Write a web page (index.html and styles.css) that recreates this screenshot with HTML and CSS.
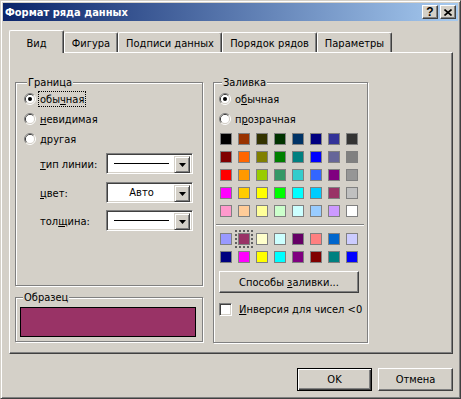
FILE: index.html
```html
<!DOCTYPE html>
<html>
<head>
<meta charset="utf-8">
<title>Формат ряда данных</title>
<link rel="stylesheet" href="styles.css">
</head>
<body>
<div class="window">
  <div class="titlebar">
    <span class="title">Формат ряда данных</span>
    <div class="tbtns">
      <div class="tbtn help">?</div>
      <div class="tbtn close"><svg width="8" height="7" viewBox="0 0 8 7"><path d="M0.5 0.5 L7.5 6.5 M7.5 0.5 L0.5 6.5" stroke="#000" stroke-width="1.6" fill="none"/></svg></div>
    </div>
  </div>
  <div class="client">
    <div class="tabs">
      <div class="tab active">Вид</div>
      <div class="tab t2">Фигура</div>
      <div class="tab t3">Подписи данных</div>
      <div class="tab t4">Порядок рядов</div>
      <div class="tab t5">Параметры</div>
    </div>
    <div class="panel">
      <div class="col-left">
        <div class="group g-border">
          <div class="legend">Граница</div>
          <div class="radio-row">
            <svg class="radio" width="12" height="12" viewBox="0 0 12 12"><path d="M2.11 9.89 A5.5 5.5 0 0 1 9.89 2.11" stroke="#808080" fill="none"/><path d="M9.89 2.11 A5.5 5.5 0 0 1 2.11 9.89" stroke="#fff" fill="none"/><path d="M2.82 9.18 A4.5 4.5 0 0 1 9.18 2.82" stroke="#404040" fill="none"/><path d="M9.18 2.82 A4.5 4.5 0 0 1 2.82 9.18" stroke="#d4d0c8" fill="none"/><circle cx="6" cy="6" r="4" fill="#fff"/><circle cx="6" cy="6" r="2" fill="#000"/></svg>
            <span class="lbl focus">обы<u>ч</u>ная</span>
          </div>
          <div class="radio-row">
            <svg class="radio" width="12" height="12" viewBox="0 0 12 12"><path d="M2.11 9.89 A5.5 5.5 0 0 1 9.89 2.11" stroke="#808080" fill="none"/><path d="M9.89 2.11 A5.5 5.5 0 0 1 2.11 9.89" stroke="#fff" fill="none"/><path d="M2.82 9.18 A4.5 4.5 0 0 1 9.18 2.82" stroke="#404040" fill="none"/><path d="M9.18 2.82 A4.5 4.5 0 0 1 2.82 9.18" stroke="#d4d0c8" fill="none"/><circle cx="6" cy="6" r="4" fill="#fff"/></svg>
            <span class="lbl"><u>н</u>евидимая</span>
          </div>
          <div class="radio-row">
            <svg class="radio" width="12" height="12" viewBox="0 0 12 12"><path d="M2.11 9.89 A5.5 5.5 0 0 1 9.89 2.11" stroke="#808080" fill="none"/><path d="M9.89 2.11 A5.5 5.5 0 0 1 2.11 9.89" stroke="#fff" fill="none"/><path d="M2.82 9.18 A4.5 4.5 0 0 1 9.18 2.82" stroke="#404040" fill="none"/><path d="M9.18 2.82 A4.5 4.5 0 0 1 2.82 9.18" stroke="#d4d0c8" fill="none"/><circle cx="6" cy="6" r="4" fill="#fff"/></svg>
            <span class="lbl">другая</span>
          </div>
          <div class="combo-row r1">
            <span class="clbl"><u>т</u>ип линии:</span>
            <div class="combo"><div class="cval"><div class="sample-line"></div></div><div class="cbtn"><svg width="7" height="4" viewBox="0 0 7 4"><path d="M0 0 H7 L3.5 4 Z" fill="#000"/></svg></div></div>
          </div>
          <div class="combo-row r2">
            <span class="clbl"><u>ц</u>вет:</span>
            <div class="combo"><div class="cval text">Авто</div><div class="cbtn"><svg width="7" height="4" viewBox="0 0 7 4"><path d="M0 0 H7 L3.5 4 Z" fill="#000"/></svg></div></div>
          </div>
          <div class="combo-row r3">
            <span class="clbl">тол<u>щ</u>ина:</span>
            <div class="combo"><div class="cval"><div class="sample-line"></div></div><div class="cbtn"><svg width="7" height="4" viewBox="0 0 7 4"><path d="M0 0 H7 L3.5 4 Z" fill="#000"/></svg></div></div>
          </div>
        </div>
        <div class="group g-sample">
          <div class="legend">Образец</div>
          <div class="sample"></div>
        </div>
      </div>
      <div class="group g-fill">
        <div class="legend">Заливка</div>
        <div class="radio-row">
          <svg class="radio" width="12" height="12" viewBox="0 0 12 12"><path d="M2.11 9.89 A5.5 5.5 0 0 1 9.89 2.11" stroke="#808080" fill="none"/><path d="M9.89 2.11 A5.5 5.5 0 0 1 2.11 9.89" stroke="#fff" fill="none"/><path d="M2.82 9.18 A4.5 4.5 0 0 1 9.18 2.82" stroke="#404040" fill="none"/><path d="M9.18 2.82 A4.5 4.5 0 0 1 2.82 9.18" stroke="#d4d0c8" fill="none"/><circle cx="6" cy="6" r="4" fill="#fff"/><circle cx="6" cy="6" r="2" fill="#000"/></svg>
          <span class="lbl">о<u>б</u>ычная</span>
        </div>
        <div class="radio-row">
          <svg class="radio" width="12" height="12" viewBox="0 0 12 12"><path d="M2.11 9.89 A5.5 5.5 0 0 1 9.89 2.11" stroke="#808080" fill="none"/><path d="M9.89 2.11 A5.5 5.5 0 0 1 2.11 9.89" stroke="#fff" fill="none"/><path d="M2.82 9.18 A4.5 4.5 0 0 1 9.18 2.82" stroke="#404040" fill="none"/><path d="M9.18 2.82 A4.5 4.5 0 0 1 2.82 9.18" stroke="#d4d0c8" fill="none"/><circle cx="6" cy="6" r="4" fill="#fff"/></svg>
          <span class="lbl">п<u>р</u>озрачная</span>
        </div>
        <div class="palette">
          <div class="sw" style="background:#000000"></div>
          <div class="sw" style="background:#993300"></div>
          <div class="sw" style="background:#333300"></div>
          <div class="sw" style="background:#003300"></div>
          <div class="sw" style="background:#003366"></div>
          <div class="sw" style="background:#000080"></div>
          <div class="sw" style="background:#333399"></div>
          <div class="sw" style="background:#333333"></div>
          <div class="sw" style="background:#800000"></div>
          <div class="sw" style="background:#ff6600"></div>
          <div class="sw" style="background:#808000"></div>
          <div class="sw" style="background:#008000"></div>
          <div class="sw" style="background:#008080"></div>
          <div class="sw" style="background:#0000ff"></div>
          <div class="sw" style="background:#666699"></div>
          <div class="sw" style="background:#808080"></div>
          <div class="sw" style="background:#ff0000"></div>
          <div class="sw" style="background:#ff9900"></div>
          <div class="sw" style="background:#99cc00"></div>
          <div class="sw" style="background:#339966"></div>
          <div class="sw" style="background:#33cccc"></div>
          <div class="sw" style="background:#3366ff"></div>
          <div class="sw" style="background:#800080"></div>
          <div class="sw" style="background:#969696"></div>
          <div class="sw" style="background:#ff00ff"></div>
          <div class="sw" style="background:#ffcc00"></div>
          <div class="sw" style="background:#ffff00"></div>
          <div class="sw" style="background:#00ff00"></div>
          <div class="sw" style="background:#00ffff"></div>
          <div class="sw" style="background:#00ccff"></div>
          <div class="sw" style="background:#993366"></div>
          <div class="sw" style="background:#c0c0c0"></div>
          <div class="sw" style="background:#ff99cc"></div>
          <div class="sw" style="background:#ffcc99"></div>
          <div class="sw" style="background:#ffff99"></div>
          <div class="sw" style="background:#ccffcc"></div>
          <div class="sw" style="background:#ccffff"></div>
          <div class="sw" style="background:#99ccff"></div>
          <div class="sw" style="background:#cc99ff"></div>
          <div class="sw" style="background:#ffffff"></div>
        </div>
        <div class="sep"></div>
        <div class="palette lower">
          <div class="sw" style="background:#9999ff"></div>
          <div class="sw selected" style="background:#993366"></div>
          <div class="sw" style="background:#ffffcc"></div>
          <div class="sw" style="background:#ccffff"></div>
          <div class="sw" style="background:#660066"></div>
          <div class="sw" style="background:#ff8080"></div>
          <div class="sw" style="background:#0066cc"></div>
          <div class="sw" style="background:#ccccff"></div>
          <div class="sw" style="background:#000080"></div>
          <div class="sw" style="background:#ff00ff"></div>
          <div class="sw" style="background:#ffff00"></div>
          <div class="sw" style="background:#00ffff"></div>
          <div class="sw" style="background:#800080"></div>
          <div class="sw" style="background:#800000"></div>
          <div class="sw" style="background:#008080"></div>
          <div class="sw" style="background:#0000ff"></div>
        </div>
        <div class="btn fill-btn"><span>Способы <u>з</u>аливки...</span></div>
        <div class="check-row">
          <div class="check"></div>
          <span class="lbl"><u>И</u>нверсия для чисел &lt;0</span>
        </div>
      </div>
    </div>
    <div class="buttons">
      <div class="btn default">OK</div>
      <div class="btn">Отмена</div>
    </div>
  </div>
</div>
</body>
</html>
```

FILE: styles.css
```css
* { box-sizing: border-box; }
html, body { margin: 0; padding: 0; background: #d4d0c8; }
body {
  font-family: "DejaVu Sans Condensed", "DejaVu Sans", sans-serif;
  font-stretch: condensed;
  font-size: 11px;
  line-height: 13px;
  color: #000;
}
u { text-decoration: underline; text-underline-offset: 1px; }

.window {
  width: 461px;
  height: 399px;
  border: 1px solid;
  border-color: #d4d0c8 #404040 #404040 #d4d0c8;
  box-shadow: inset 1px 1px 0 #fff, inset -1px -1px 0 #808080;
  padding: 2px;
  background: #d4d0c8;
  display: flex;
  flex-direction: column;
}

.titlebar {
  height: 18px;
  flex: none;
  background: linear-gradient(to right, #0a246a, #a6caf0);
  display: flex;
  align-items: center;
  justify-content: space-between;
  padding: 0 2px 0 2px;
}
.title {
  color: #fff;
  font-weight: bold;
  font-size: 11px;
}
.tbtns { display: flex; gap: 2px; }
.tbtn {
  width: 16px;
  height: 14px;
  background: #d4d0c8;
  border: 1px solid;
  border-color: #fff #404040 #404040 #fff;
  box-shadow: inset -1px -1px 0 #808080;
  display: flex;
  align-items: center;
  justify-content: center;
}
.help {
  font-family: "Liberation Sans", sans-serif;
  font-weight: bold;
  font-size: 12px;
  line-height: 12px;
  padding-bottom: 1px;
}

.client {
  flex: 1;
  display: flex;
  flex-direction: column;
  padding: 0 5px 0 6px;
}
.tabs {
  height: 31px;
  flex: none;
  display: flex;
  align-items: flex-end;
}
.tab {
  height: 20px;
  border-top: 1px solid #fff;
  border-left: 1px solid #fff;
  border-right: 1px solid #404040;
  box-shadow: inset -1px 0 0 #808080;
  border-radius: 2px 2px 0 0;
  text-align: center;
  padding-top: 4px;
}
.tab.active {
  width: 55px;
  height: 23px;
  margin-bottom: -1px;
  position: relative;
  z-index: 1;
  background: #d4d0c8;
  padding-top: 6px;
}
.t2 { width: 54px; }
.t3 { width: 104px; }
.t4 { width: 95px; }
.t5 { width: 75px; }

.panel {
  height: 302px;
  flex: none;
  border: 1px solid;
  border-color: #fff #404040 #404040 #fff;
  box-shadow: inset -1px -1px 0 #808080;
  display: flex;
  align-items: flex-start;
  gap: 10px;
  padding: 29px 0 0 5px;
}

.col-left { display: flex; flex-direction: column; }

.group {
  border: 1px solid #808080;
  box-shadow: inset 1px 1px 0 #fff, 1px 1px 0 #fff;
}
.legend {
  width: max-content;
  margin: -7px 0 0 3px;
  padding: 0 1px;
  background: #d4d0c8;
  line-height: 13px;
}

.g-border {
  width: 188px;
  height: 204px;
  padding-left: 8px;
}
.g-sample {
  width: 188px;
  height: 45px;
  margin-top: 11px;
  padding-left: 4px;
}
.sample {
  width: 176px;
  height: 30px;
  margin-top: 3px;
  background: #993366;
  border: 1px solid #000;
}

.radio-row {
  height: 20px;
  display: flex;
  align-items: center;
  gap: 4px;
}
.radio { flex: none; display: block; }
.lbl { white-space: nowrap; }
.lbl.focus {
  border: 1px dotted #000;
  padding: 1px 1px 0 1px;
  margin-left: -2px;
}

.combo-row {
  display: flex;
  align-items: center;
  padding-left: 16px;
}
.combo-row.r1 { margin-top: 4px; }
.combo-row.r2 { margin-top: 8px; }
.combo-row.r3 { margin-top: 7px; }
.clbl { width: 66px; white-space: nowrap; padding-top: 2px; }
.combo {
  width: 87px;
  height: 21px;
  background: #fff;
  border: 1px solid;
  border-color: #808080 #fff #fff #808080;
  box-shadow: inset 1px 1px 0 #404040, inset -1px -1px 0 #d4d0c8;
  padding: 2px;
  display: flex;
}
.cval {
  flex: 1;
  display: flex;
  align-items: center;
  justify-content: center;
  padding: 0 5px;
}
.sample-line { height: 1px; background: #000; width: 100%; }
.cbtn {
  width: 16px;
  height: 17px;
  flex: none;
  background: #d4d0c8;
  border: 1px solid;
  border-color: #d4d0c8 #404040 #404040 #d4d0c8;
  box-shadow: inset 1px 1px 0 #fff, inset -1px -1px 0 #808080;
  display: flex;
  align-items: center;
  justify-content: center;
}
.cbtn svg { display: block; }

.g-fill {
  width: 155px;
  height: 261px;
  padding-left: 5px;
}
.g-fill .radio-row:first-of-type { margin-top: -1px; }
.g-fill .radio-row { padding-left: 0; }
.palette {
  display: grid;
  grid-template-columns: repeat(8, 12px);
  grid-auto-rows: 12px;
  gap: 6px;
  margin-top: 4px;
  margin-left: 1px;
}
.palette.lower { margin-top: 7px; }
.sw { border: 1px solid #808080; }
.sw.selected {
  outline: 2px dotted #606060;
  outline-offset: 1px;
}
.sep {
  height: 2px;
  margin: 7px 3px 0 -3px;
  border-top: 1px solid #808080;
  border-bottom: 1px solid #fff;
}

.btn {
  border: 1px solid;
  border-color: #fff #404040 #404040 #fff;
  box-shadow: inset -1px -1px 0 #808080;
  background: #d4d0c8;
  display: flex;
  align-items: center;
  justify-content: center;
  white-space: nowrap;
}
.fill-btn {
  width: 140px;
  height: 22px;
  margin-top: 8px;
}
.check-row {
  display: flex;
  align-items: center;
  gap: 6px;
  margin-top: 10px;
  padding-left: 0;
}
.check {
  width: 13px;
  height: 13px;
  flex: none;
  background: #fff;
  border: 1px solid;
  border-color: #808080 #fff #fff #808080;
  box-shadow: inset 1px 1px 0 #404040, inset -1px -1px 0 #d4d0c8;
}
.check-row .lbl { padding-left: 1px; }

.buttons {
  display: flex;
  justify-content: flex-end;
  gap: 6px;
  margin-top: 14px;
}
.buttons .btn {
  width: 75px;
  height: 23px;
}
.btn.default {
  border-color: #000;
  box-shadow: inset 1px 1px 0 #fff, inset -1px -1px 0 #404040, inset -2px -2px 0 #808080;
}
```
